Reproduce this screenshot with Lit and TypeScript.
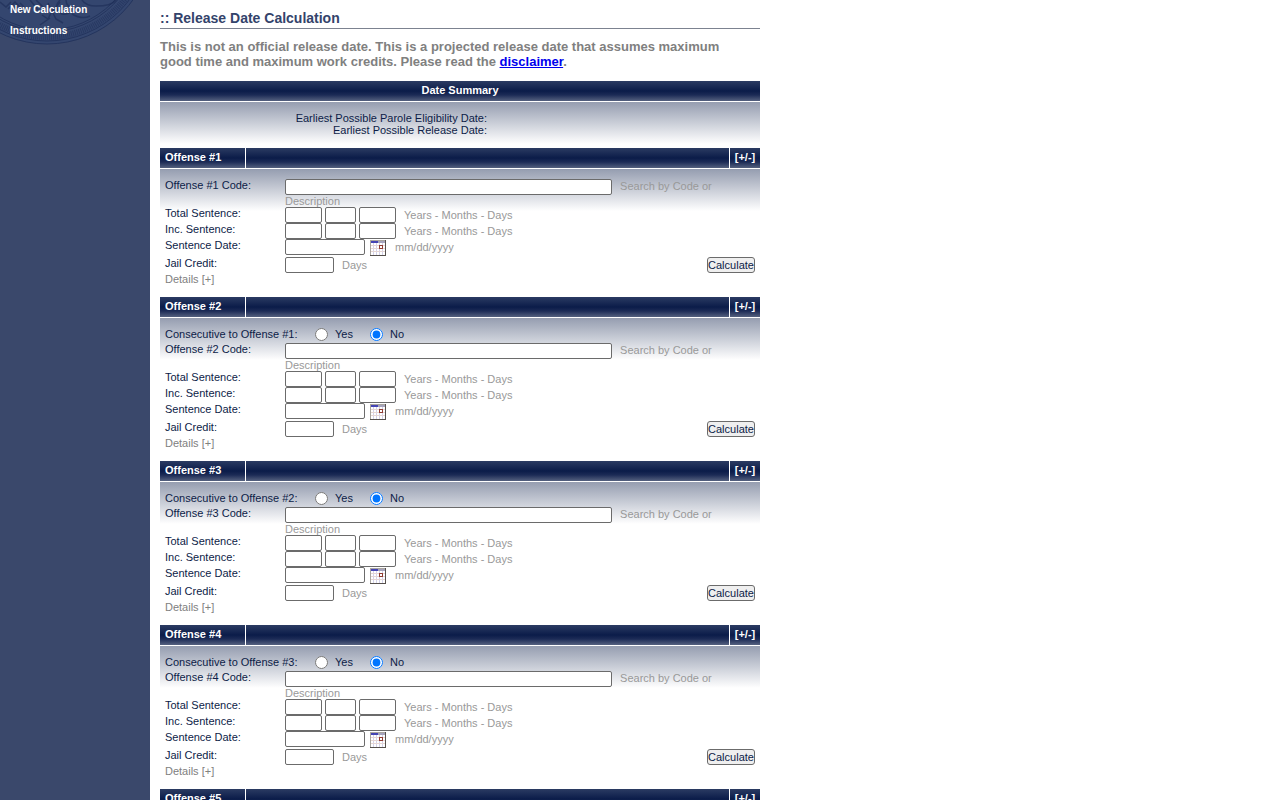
import { LitElement, html, svg, css } from "lit";
import { customElement, property } from "lit/decorators.js";

const arc = (r: number) => svg`<circle cx="47" cy="-62" r=${r}></circle>`;

@customElement("calendar-icon")
class CalendarIcon extends LitElement {
  static styles = css`
    :host { display: block; width: 16px; height: 16px; }
    svg { display: block; }
  `;
  render() {
    return html`<svg width="16" height="16" viewBox="0 0 16 16" shape-rendering="crispEdges" aria-hidden="true">
      <rect width="16" height="16" fill="#fff"></rect>
      <path d="M3.5 3v12M6.5 3v12M9.5 3v12M12.5 3v12" stroke="#d4d2ea" fill="none"></path>
      <path d="M1 5.5h14M1 8.5h14M1 11.5h14" stroke="#e6d6d4" fill="none"></path>
      <path d="M0.5 0v16M0 0.5h16" stroke="#a8a4a0" fill="none"></path>
      <path d="M15.5 0v16M0 15.5h16" stroke="#55504c" fill="none"></path>
      <rect x="1" y="1" width="7" height="2" fill="#4444b4"></rect>
      <rect x="8" y="1" width="7" height="2" fill="#a6a4bc"></rect>
      <rect x="9.5" y="5.5" width="3" height="3" fill="#fff" stroke="#913c32"></rect>
    </svg>`;
  }
}

@customElement("offense-panel")
class OffensePanel extends LitElement {
  @property({ type: Number }) number = 1;

  static styles = css`
    :host { display: block; color: #0d1c47; font: 11px/12px "Liberation Sans", Arial, sans-serif; }
    .bar {
      display: grid; grid-template-columns: 85px 1fr 30px; column-gap: 1px;
      margin-bottom: 1px; line-height: 18px; font-weight: bold; color: #fff;
    }
    .cell { box-sizing: border-box; background: linear-gradient(#2b3b62, #0b1c49 50%, #1c2b56 70%, #55617f); height: 20px; }
    .name { padding-left: 5px; }
    .toggle { border: 0; padding: 0 0 2px; color: #fff; font: inherit; text-align: center; }
    .body {
      padding: 10px 5px 12px;
      background: linear-gradient(#959db0, #fff) no-repeat top / 100% 42px;
    }
    .row { display: grid; grid-template-columns: 120px 1fr; }
    .date { min-height: 18px; }
    .jail { grid-template-columns: 120px 1fr auto; }
    .consecutive { display: flex; height: 15px; }
    .question { width: 150px; }
    .option { display: flex; width: 55px; gap: 7px; }
    .option input { margin: 0; width: 13px; height: 13px; }
    .fields { display: flex; gap: 3px; line-height: 16px; }
    .code { line-height: 12px; }
    .hint { color: #999; }
    .fields .hint, .code .hint { padding-left: 5px; }
    .text {
      box-sizing: border-box; height: 16px; margin: 0; padding: 0 2px;
      border: 1px solid #6b6b6b; border-radius: 2px; background: #fff; font: inherit; vertical-align: middle;
    }
    .w-code { width: 327px; }
    .w-unit { width: 37px; }
    .w-month { width: 31px; }
    .w-date { width: 80px; }
    .w-days { width: 49px; }
    .picker { border: 0; padding: 0; margin: 1px 1px 0 2px; background: none; height: 16px; }
    .calculate {
      box-sizing: border-box; width: 48px; height: 16px; padding: 0; border: 1px solid #6b6b6b;
      border-radius: 3px; background: #efefef; color: #0d1c47; font: inherit; line-height: 14px;
    }
    .details { border: 0; padding: 0; display: block; background: none; color: #808080; font: inherit; }
  `;

  private period(id: string, label: string) {
    return html`<div class="row">
      <label for=${id}>${label}</label>
      <div class="fields">
        <input class="text w-unit" id=${id} aria-label="${label} years">
        <input class="text w-month" aria-label="${label} months">
        <input class="text w-unit" aria-label="${label} days">
        <span class="hint">Years - Months - Days</span>
      </div>
    </div>`;
  }

  render() {
    const n = this.number;
    return html`
      <div class="bar">
        <div class="cell name">Offense #${n}</div>
        <div class="cell"></div>
        <button class="cell toggle">[+/-]</button>
      </div>
      <div class="body">
        ${n > 1
          ? html`<div class="consecutive">
              <span class="question">Consecutive to Offense #${n - 1}:</span>
              <label class="option"><input type="radio" name="consecutive">Yes</label>
              <label class="option"><input type="radio" name="consecutive" checked>No</label>
            </div>`
          : ""}
        <div class="row">
          <label for="code">Offense #${n} Code:</label>
          <div class="code"><input class="text w-code" id="code"> <span class="hint">Search by Code or Description</span></div>
        </div>
        ${this.period("total", "Total Sentence:")}
        ${this.period("inc", "Inc. Sentence:")}
        <div class="row date">
          <label for="date">Sentence Date:</label>
          <div class="fields">
            <input class="text w-date" id="date">
            <button class="picker" aria-label="Pick a date"><calendar-icon></calendar-icon></button>
            <span class="hint">mm/dd/yyyy</span>
          </div>
        </div>
        <div class="row jail">
          <label for="jail">Jail Credit:</label>
          <div class="fields"><input class="text w-days" id="jail"><span class="hint">Days</span></div>
          <button class="calculate">Calculate</button>
        </div>
        <button class="details">Details [+]</button>
      </div>
    `;
  }
}

@customElement("app-root")
class AppRoot extends LitElement {
  static styles = css`
    :host {
      display: flex; min-height: 100vh; background: #fff; color: #0d1c47;
      font: 11px/12px "Liberation Sans", Arial, sans-serif;
    }
    .side { position: relative; flex: none; width: 150px; background: #3a486b; }
    .seal { position: absolute; top: 0; left: 0; }
    .menu { position: relative; display: flex; flex-direction: column; gap: 9px; padding: 4px 10px; }
    .menu a { color: #fff; font-size: 10px; font-weight: bold; text-decoration: none; }
    main { width: 600px; padding: 10px; }
    h1 { margin: 0 0 10px; padding-bottom: 2px; border-bottom: 1px solid #7c8290; color: #33436b; font-size: 14px; line-height: 16px; }
    .notice { margin: 0 0 12px; padding-right: 20px; color: #808080; font-size: 13px; font-weight: bold; line-height: 15px; }
    .notice a { color: #00e; }
    h2 {
      box-sizing: border-box; margin: 0 0 1px; height: 20px; line-height: 18px; text-align: center; font-size: 11px; color: #fff;
      background: linear-gradient(#2b3b62, #0b1c49 50%, #1c2b56 70%, #55617f);
    }
    .summary {
      padding: 10px 273px 12px 0; text-align: right;
      background: linear-gradient(#959db0, #fff) no-repeat top / 100% 42px;
    }
  `;

  render() {
    return html`
      <nav class="side">
        <svg class="seal" width="150" height="50" viewBox="0 0 150 50" fill="none" stroke="#1c2c56" aria-hidden="true">
          <circle cx="47" cy="-62" r="106" fill="#34466f" stroke="none"></circle>
          <g stroke-width="1" opacity="0.65">${arc(106)}${arc(103)}${arc(94)}${arc(92)}</g>
          <circle cx="47" cy="-62" r="99" stroke-width="6" stroke-dasharray="1 1" opacity="0.5"></circle>
          <g opacity="0.6" stroke-width="1.5">
            <path d="M0 2l6 5 5-5M8 9l7-7 7 7M20 3l6 6M30 0l8 10M36 0l8 8M42 15l6 4 4-8 4 8 7 4M50 18l-10 7M48 3l4 9 8-10"></path>
            <path d="M60 0q-8 8 2 14q8 1 10-5M66 0q0 8 10 8M82 0q4 6 14 6q16 0 20-6M72 14q10 6 18 2"></path>
          </g>
        </svg>
        <div class="menu"><a href="#new">New Calculation</a><a href="#instructions">Instructions</a></div>
      </nav>
      <main>
        <h1>:: Release Date Calculation</h1>
        <p class="notice">This is not an official release date. This is a projected release date that assumes maximum good time and maximum work credits. Please read the <a href="#disclaimer">disclaimer</a>.</p>
        <h2>Date Summary</h2>
        <div class="summary">Earliest Possible Parole Eligibility Date:<br>Earliest Possible Release Date:</div>
        ${[1, 2, 3, 4, 5].map((n) => html`<offense-panel .number=${n}></offense-panel>`)}
      </main>
    `;
  }
}
